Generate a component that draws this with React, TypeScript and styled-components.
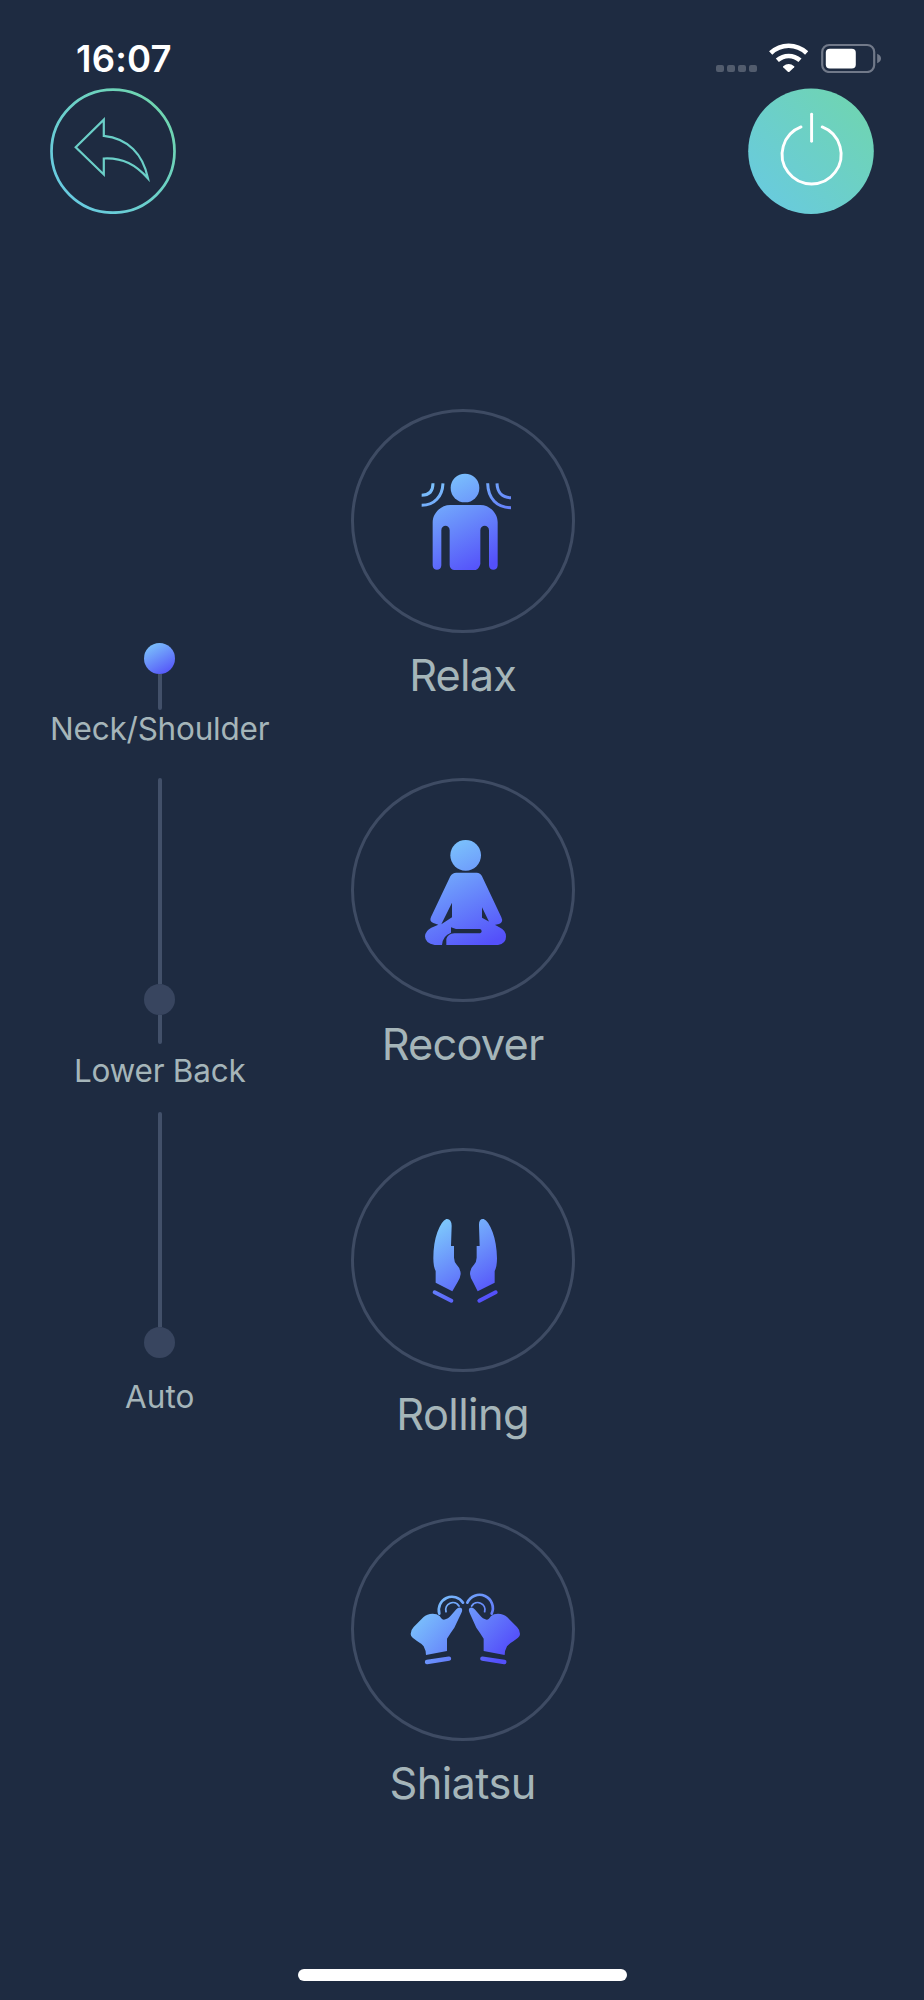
import React from "react";
import styled, { createGlobalStyle } from "styled-components";

const GlobalStyle = createGlobalStyle`
  *, *::before, *::after { box-sizing: border-box; }
  body { margin: 0; background: #1e2b41; }
`;

const Screen = styled.div`
  width: 924px;
  height: 2000px;
  display: flex;
  flex-direction: column;
  overflow: hidden;
  background: #1e2b41;
  font-family: Inter, "Liberation Sans", sans-serif;
  color: #a5b5b9;
`;

const StatusBar = styled.header`
  height: 88px;
  flex: none;
  display: flex;
  align-items: flex-start;
  justify-content: space-between;
  padding: 39px 43.5px 0 76px;
`;

const Clock = styled.time`
  font-size: 36.5px;
  font-weight: 600;
  line-height: 40px;
  letter-spacing: 0.2px;
  color: #fff;
`;

const StatusIcons = styled.div`
  display: flex;
  padding-top: 4px;
`;

const Signal = styled.div`
  display: flex;
  gap: 3.4px;
  padding-top: 22px;
  margin-right: 12.5px;
`;

const SignalDot = styled.i`
  width: 7.6px;
  height: 7.4px;
  border-radius: 2px;
  background: #525c6d;
`;

const NavBar = styled.nav`
  height: 126px;
  flex: none;
  display: flex;
  justify-content: space-between;
  padding: 0 50px 0 49.5px;
`;

const RoundButton = styled.button`
  width: 126px;
  height: 126px;
  padding: 0;
  border: 0;
  border-radius: 50%;
  background: none;
  svg { display: block; }
`;

const Main = styled.main`
  flex: 1;
  min-height: 0;
  display: grid;
  grid-template-columns: 319.4px 286.4px 1fr;
`;

const Rail = styled.section`
  display: flex;
  flex-direction: column;
  align-items: center;
  padding-top: 428.5px;
`;

const Stop = styled.span<{ $active?: boolean }>`
  width: 31px;
  height: 31px;
  flex: none;
  border-radius: 50%;
  background: ${(p) => (p.$active ? "linear-gradient(150deg, #7cc3fb 8%, #5453f9 92%)" : "#38455f")};
`;

const Track = styled.span<{ $length: number; $round?: "top" | "bottom" }>`
  width: 4px;
  height: ${(p) => p.$length}px;
  flex: none;
  background: #425069;
  border-radius: ${(p) => (p.$round === "top" ? "2px 2px 0 0" : "0 0 2px 2px")};
`;

const StopLabel = styled.span<{ $before: number; $after: number; $tracking: number }>`
  font-size: 31.5px;
  line-height: 36px;
  white-space: nowrap;
  letter-spacing: ${(p) => p.$tracking}px;
  margin: ${(p) => p.$before}px 0 ${(p) => p.$after}px;
`;

const Modes = styled.section`
  display: flex;
  flex-direction: column;
  align-items: center;
  padding-top: 194.6px;
`;

const Mode = styled.article`
  height: 369.6px;
  flex: none;
  display: flex;
  flex-direction: column;
  align-items: center;
`;

const ModeRing = styled.div`
  width: 224px;
  height: 224px;
  border: 3px solid #3e4b63;
  border-radius: 50%;
  svg { display: block; width: 220px; height: 220px; margin: -1px; }
`;

const ModeLabel = styled.span<{ $tracking: number }>`
  margin-top: 12px;
  font-size: 43.3px;
  line-height: 60px;
  letter-spacing: ${(p) => p.$tracking}px;
`;

const Footer = styled.footer`
  height: 31px;
  flex: none;
  display: flex;
  justify-content: center;
`;

const HomeIndicator = styled.div`
  width: 329px;
  height: 12px;
  border-radius: 6px;
  background: #fff;
`;

const Gap = styled.span`
  width: 12.5px;
`;

type GradientProps = { id: string; x1: number; y1: number; x2: number; y2: number };

const BlueGradient = ({ id, ...line }: GradientProps) => (
  <defs>
    <linearGradient id={id} gradientUnits="userSpaceOnUse" {...line}>
      <stop offset="0" stopColor="#7cc5fc" />
      <stop offset="1" stopColor="#5450fa" />
    </linearGradient>
  </defs>
);

const RelaxIcon = () => (
  <svg viewBox="-170 -148 660 660">
    <BlueGradient id="relax" x1={90} y1={50} x2={230} y2={320} />
    <g fill="url(#relax)">
      <circle cx="166" cy="83" r="43" />
      <path d="M122 134H212C240 134 264 158 264 186V315C264 333 238 333 238 315V210C238 192 212 192 212 210V311Q208 326 198 329H133Q120 326 120 313V210C120 192 95 192 95 210V315C95 333 69 333 69 315V186C69 158 94 134 122 134Z" />
    </g>
    <g fill="none" stroke="url(#relax)" strokeWidth="9">
      <path d="M70 69C70 92 58 105 36 105" />
      <path d="M100 69C98 109 74 135 36 135" />
      <path d="M234 69C235 115 262 142 304 142" />
      <path d="M262 69C263 96 278 112 304 112" />
    </g>
  </svg>
);

const RecoverIcon = () => (
  <svg viewBox="-170 -149 660 660">
    <BlueGradient id="recover" x1={95} y1={45} x2={245} y2={340} />
    <g fill="url(#recover)">
      <circle cx="168" cy="77" r="46" />
      <path d="M140 129H201Q212 129 217 140L275 263Q282 278 268 283L244 288L217 233V264L269 293Q289 302 289 321Q289 341 265 346H110V328Q114 313 134 311H211Q216 309 216 305Q216 299 211 298H139L124 293V309Q99 318 97 346H75Q46 341 46 320Q47 303 65 294L86 285L71 280Q58 275 64 262L122 140Q128 129 140 129ZM127 219L95 284L127 263Z" />
    </g>
  </svg>
);

const RollingIcon = () => (
  <svg viewBox="-200 -151 660 660">
    <BlueGradient id="rolling" x1={55} y1={80} x2={190} y2={300} />
    <g fill="url(#rolling)">
      <path d="M80 56Q95 54 96 76L94 137H103V172Q104 185 110 192Q123 205 123 221Q122 233 114 245L98 273L48 247V212Q41 199 41 174Q41 129 53 96Q66 61 80 56Z" />
      <path d="M192 56Q177 54 178 76L180 137H171V172Q170 185 164 192Q151 205 151 221Q152 233 160 245L174 273L225 247V212Q232 199 232 174Q231 129 219 96Q206 61 192 56Z" />
    </g>
    <g stroke="url(#rolling)" strokeWidth="12" strokeLinecap="round">
      <path d="M45 276L95 301M228 276L179 301" />
    </g>
  </svg>
);

const ShiatsuIcon = () => (
  <svg viewBox="-140 -183 660 660">
    <BlueGradient id="shiatsu" x1={75} y1={70} x2={285} y2={255} />
    <g fill="url(#shiatsu)">
      <path d="M33 162Q33 150 42 141L71 112Q82 101 99 101Q112 101 120 108Q126 119 133 119Q146 117 155 105L170 88Q177 80 185 84Q190 89 185 99L164 143Q153 158 142 176V213L79 225Q79 212 72 199Q66 191 52 183L39 173Q33 168 33 162Z" />
      <path d="M361 162Q361 150 352 141L323 112Q312 101 295 101Q282 101 274 108Q268 119 261 119Q249 117 240 105L225 88Q218 80 210 84Q205 89 210 99L230 143Q241 158 252 176V213L315 225Q315 212 322 199Q328 191 342 183L355 173Q361 168 361 162Z" />
    </g>
    <g fill="none" stroke="url(#shiatsu)" strokeLinecap="round">
      <path strokeWidth="8" d="M119 101A39.600 39.600 0 0 1 190 68" />
      <path strokeWidth="8" d="M276 101A39.600 39.600 0 0 0 203 68" />
      <path strokeWidth="5.5" d="M139 95A21.500 21.500 0 0 1 178 78" />
      <path strokeWidth="5.5" d="M255 95A21.500 21.500 0 0 0 216 78" />
      <path strokeWidth="13" d="M82 246L148 236M248 236L314 246" />
    </g>
  </svg>
);

const BackIcon = () => (
  <svg width="126" height="126" viewBox="50 88 126 126" fill="none">
    <defs>
      <linearGradient id="back" gradientUnits="userSpaceOnUse" x1="66" y1="193" x2="158" y2="108">
        <stop offset="0" stopColor="#68cbe0" />
        <stop offset="1" stopColor="#6fd5b1" />
      </linearGradient>
    </defs>
    <circle cx="113" cy="151.2" r="61.5" stroke="url(#back)" strokeWidth="2.7" />
    <path
      d="M75.700 147.300L103.800 119.700V135.900C128 138.500 143 154 148 178.500C136 165 123 157.500 103.800 158.500V174.500Z"
      stroke="#6bcfc8"
      strokeWidth="2.2"
    />
  </svg>
);

const PowerIcon = () => (
  <svg width="126" height="126" viewBox="748.5 88 126 126" fill="none">
    <defs>
      <linearGradient id="power" gradientUnits="userSpaceOnUse" x1="766" y1="196" x2="857" y2="107">
        <stop offset="0" stopColor="#69cbdc" />
        <stop offset="1" stopColor="#6fd4b4" />
      </linearGradient>
    </defs>
    <circle cx="811.5" cy="151.2" r="62.8" fill="url(#power)" />
    <g stroke="#fff" strokeWidth="2.9" strokeLinecap="round">
      <path d="M801.500 126.900A29.500 29.500 0 1 0 822.700 126.900" />
      <path d="M812.100 114.200V141.300" />
    </g>
  </svg>
);

const WifiIcon = () => (
  <svg width="39" height="30" viewBox="0 0 117 90" fill="none">
    <g stroke="#fff" strokeWidth="14">
      <path d="M5 30C36 1 82 1 113 30" />
      <path d="M25 52C45 34.500 73 34.500 93 52" />
    </g>
    <path d="M42.500 69.500Q59 57 75.500 69.500Q77 71 75.500 73L61.500 86Q59 88 56.500 86L42.500 73Q41 71 42.500 69.500Z" fill="#fff" />
  </svg>
);

const BatteryIcon = () => (
  <svg width="60" height="30" viewBox="821 43 60 30">
    <rect x="822.2" y="45" width="52" height="27" rx="7" fill="none" stroke="#717989" strokeWidth="2.2" />
    <rect x="825.8" y="48.8" width="30" height="19.7" rx="4" fill="#fff" />
    <path d="M877.200 53.800Q881 55.500 881 58.500Q881 61.500 877.200 63.200Z" fill="#717989" />
  </svg>
);

const modes = [
  { name: "Relax", Icon: RelaxIcon, tracking: -0.8 },
  { name: "Recover", Icon: RecoverIcon, tracking: -0.8 },
  { name: "Rolling", Icon: RollingIcon, tracking: -0.6 },
  { name: "Shiatsu", Icon: ShiatsuIcon, tracking: -0.6 },
];

export default function App() {
  return (
    <Screen>
      <GlobalStyle />
      <StatusBar>
        <Clock>16:07</Clock>
        <StatusIcons>
          <Signal>
            <SignalDot />
            <SignalDot />
            <SignalDot />
            <SignalDot />
          </Signal>
          <WifiIcon />
          <Gap />
          <BatteryIcon />
        </StatusIcons>
      </StatusBar>
      <NavBar>
        <RoundButton aria-label="Back"><BackIcon /></RoundButton>
        <RoundButton aria-label="Power"><PowerIcon /></RoundButton>
      </NavBar>
      <Main>
        <Rail>
          <Stop $active />
          <Track $length={36.5} $round="bottom" />
          <StopLabel $before={0.7} $after={31.3} $tracking={-0.22}>Neck/Shoulder</StopLabel>
          <Track $length={206.5} $round="top" />
          <Stop />
          <Track $length={29} $round="bottom" />
          <StopLabel $before={8.3} $after={23.7} $tracking={-0.25}>Lower Back</StopLabel>
          <Track $length={215} $round="top" />
          <Stop />
          <StopLabel $before={20.2} $after={0} $tracking={0}>Auto</StopLabel>
        </Rail>
        <Modes>
          {modes.map(({ name, Icon, tracking }) => (
            <Mode key={name}>
              <ModeRing><Icon /></ModeRing>
              <ModeLabel $tracking={tracking}>{name}</ModeLabel>
            </Mode>
          ))}
        </Modes>
      </Main>
      <Footer><HomeIndicator /></Footer>
    </Screen>
  );
}
